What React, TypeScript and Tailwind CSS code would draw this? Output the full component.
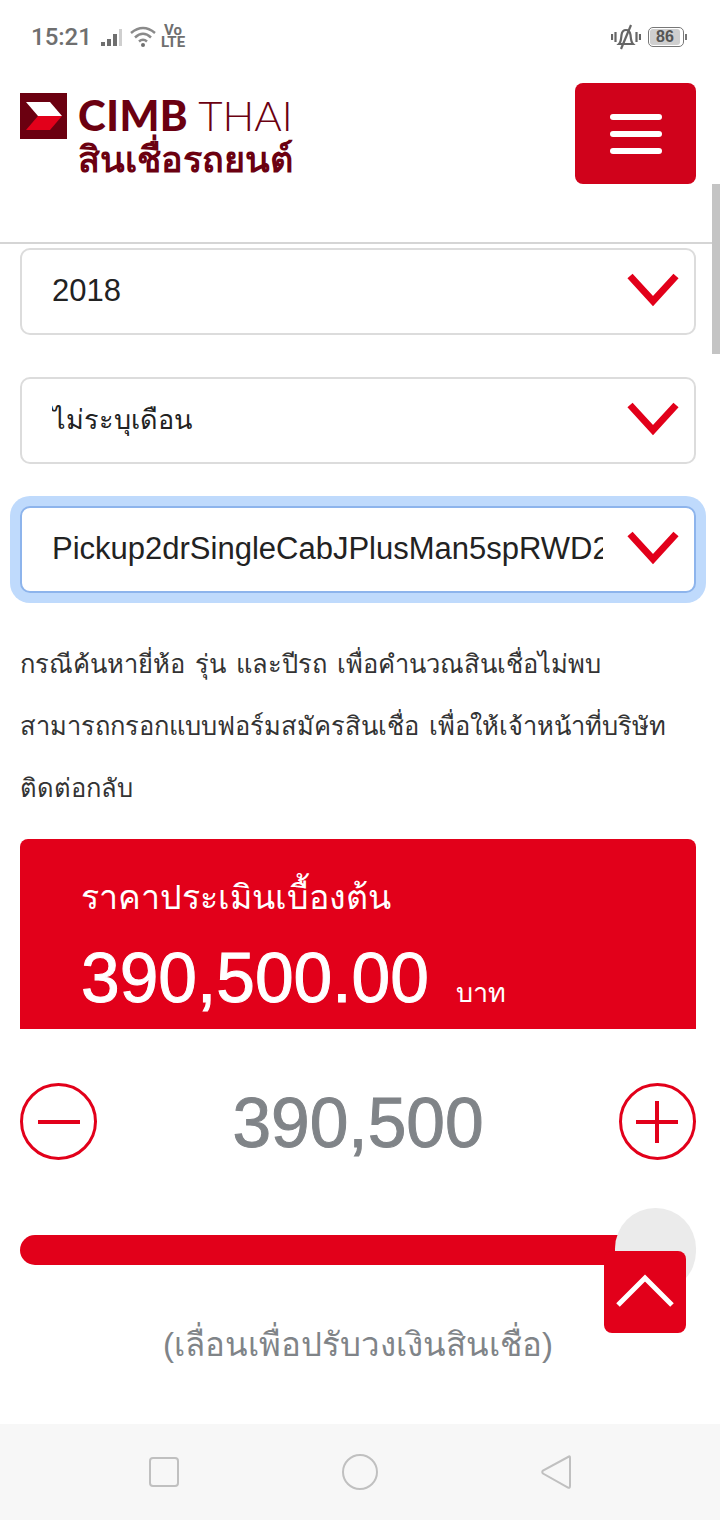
import React from 'react';

const SANS = 'font-["Liberation_Sans","Noto_Sans",sans-serif]';

const ChevronDown = () => (
  <svg width="52" height="36" viewBox="0 0 52 36" fill="none" className="shrink-0 -mt-[4px]">
    <path d="M3 4 L26 29 L49 4" stroke="#e2001a" strokeWidth="7" strokeLinejoin="miter" />
  </svg>
);

const SelectBox: React.FC<{ label: string; focused?: boolean; thai?: boolean }> = ({ label, focused, thai }) => (
  <div
    className={`h-[87px] rounded-[10px] border-2 bg-white flex items-center pl-[30px] pr-[15px] ${
      focused ? 'border-[#8db4ec] shadow-[0_0_0_10px_#bfdafc]' : 'border-[#dcdcdc]'
    }`}
  >
    <div className={`w-[551px] overflow-hidden whitespace-nowrap text-[#222] ${thai ? 'text-[27px]' : 'text-[31px]'}`}>
      {label}
    </div>
    <div className="ml-auto flex">
      <ChevronDown />
    </div>
  </div>
);

const StatusBar = () => (
  <div className="h-[74px] flex items-center justify-between pl-[31px] pr-[33px] text-[#6f6f6f] shrink-0">
    <div className="flex items-center">
      <span className="font-['Roboto',sans-serif] text-[24px] font-medium leading-none">15:21</span>
      <svg width="24" height="20" viewBox="0 0 24 20" className="ml-[8px] mt-[2px]">
        <rect x="1" y="14" width="4" height="4" fill="#6f6f6f" />
        <rect x="7" y="11" width="4" height="7" fill="#6f6f6f" />
        <rect x="13" y="6" width="4" height="12" fill="#6f6f6f" />
        <rect x="19" y="1" width="3" height="17" fill="#cfcfcf" />
      </svg>
      <svg width="28" height="22" viewBox="0 0 28 22" fill="none" className="ml-[5px]">
        <path d="M2 7 Q14 -3 26 7" stroke="#8a8a8a" strokeWidth="2.5" />
        <path d="M6 11.5 Q14 4 22 11.5" stroke="#8a8a8a" strokeWidth="2.5" />
        <path d="M10 15.5 Q14 12 18 15.5" stroke="#8a8a8a" strokeWidth="2.5" />
        <circle cx="14" cy="19" r="2" fill="#6f6f6f" />
      </svg>
      <div className="font-['Roboto',sans-serif] ml-[4px] -mt-[2px] flex flex-col items-center text-[15px] font-bold leading-[12px] text-[#6f6f6f]">
        <span>Vo</span>
        <span>LTE</span>
      </div>
    </div>
    <div className="flex items-center">
      <svg width="30" height="26" viewBox="0 0 30 26" fill="none" stroke="#666" strokeWidth="2.2">
        <path d="M1 10v6M4.500 8v10M25.500 8v10M29 10v6" />
        <path d="M8 20c2-2 2-5 2.500-9 .5-3.500 2-5 4.500-5s4 1.500 4.500 5c.5 4 .5 7 2.500 9z" />
        <path d="M20 1L10 25" />
      </svg>
      <div className="ml-[7px] w-[36px] h-[20px] rounded-[5px] border border-[#777] p-[1px] flex">
        <div className={`${SANS} w-[30px] rounded-[3px] bg-[#cfcfcf] text-[16px] font-bold leading-[16px] text-center text-[#555]`}>86</div>
      </div>
      <div className="ml-[1px] w-[2px] h-[6px] bg-[#777]" />
    </div>
  </div>
);

const Logo = () => (
  <div className="flex items-start">
    <svg width="47" height="46" viewBox="0 0 47 46" className="shrink-0">
      <rect width="47" height="46" fill="#6b0010" />
      <path d="M6 9 H30 L42 23 H18 Z" fill="#ffffff" />
      <path d="M18 23 H42 L30 37 H6 Z" fill="#e2001a" />
    </svg>
    <div className="ml-[11px] flex flex-col">
      <div className="flex items-center h-[44px] text-[#6b0010] whitespace-nowrap">
        <span className="font-['Lato',sans-serif] font-black text-[42px] leading-none tracking-[0.5px]">CIMB</span>
        <span className="font-['Lato',sans-serif] font-light text-[42px] leading-none ml-[10px]">THAI</span>
      </div>
      <div className={`${SANS} text-[#6b0010] font-bold text-[36px] leading-[42px] mt-[2px]`}>สินเชื่อรถยนต์</div>
    </div>
  </div>
);

const NavBar = () => (
  <div className="h-[96px] bg-[#f7f7f7] flex items-center justify-between pl-[149px] pr-[148px] shrink-0">
    <div className="w-[30px] h-[30px] rounded-[4px] border-2 border-[#c0c0c0]" />
    <div className="w-[36px] h-[36px] rounded-full border-2 border-[#c0c0c0]" />
    <svg width="32" height="36" viewBox="0 0 32 36" fill="none">
      <path d="M29 2.500 Q30 2 30 4 V32 Q30 34.500 28 33.500 L3 19.500 Q1.500 18 3 16.500 Z" stroke="#c0c0c0" strokeWidth="2" />
    </svg>
  </div>
);

export default function App() {
  return (
    <div className={`${SANS} relative w-[720px] h-[1520px] overflow-hidden bg-white flex flex-col`}>
      <StatusBar />

      {/* header */}
      <header className="h-[170px] shrink-0 border-b-2 border-[#d5d5d5] pl-[20px] pr-[24px] flex items-start justify-between">
        <div className="mt-[19px]">
          <Logo />
        </div>
        <button className="mt-[9px] w-[121px] h-[101px] rounded-lg bg-[#d0021b] flex flex-col items-center justify-center gap-[11px]">
          <span className="w-[52px] h-[6px] rounded-sm bg-white" />
          <span className="w-[52px] h-[6px] rounded-sm bg-white" />
          <span className="w-[52px] h-[6px] rounded-sm bg-white" />
        </button>
      </header>

      <main className="flex-1 px-[20px] pr-[24px] pt-[4px]">
        <div className="flex flex-col gap-[42px]">
          <SelectBox label="2018" />
          <SelectBox label="ไม่ระบุเดือน" thai />
          <SelectBox label="Pickup2drSingleCabJPlusMan5spRWD2.4" focused />
        </div>

        <p className="mt-[40px] text-[25.5px] leading-[62px] [word-spacing:3px] text-[#333] whitespace-nowrap">
          กรณีค้นหายี่ห้อ รุ่น และปีรถ เพื่อคำนวณสินเชื่อไม่พบ
          <br />
          สามารถกรอกแบบฟอร์มสมัครสินเชื่อ เพื่อให้เจ้าหน้าที่บริษัท
          <br />
          ติดต่อกลับ
        </p>

        {/* price card */}
        <div className="mt-[20px] h-[190px] rounded-t-lg bg-[#e2001a] pl-[61px] pt-[31px] text-white">
          <div className="text-[34px] leading-[54px]">ราคาประเมินเบื้องต้น</div>
          <div className="flex items-baseline mt-[16px]">
            <span className="text-[69.5px] leading-[76px] [-webkit-text-stroke:1px_white]">390,500.00</span>
            <span className="ml-[27px] text-[27px]">บาท</span>
          </div>
        </div>

        {/* stepper */}
        <div className="mt-[54px] flex items-center justify-between">
          <div className="w-[77px] h-[77px] rounded-full border-[3px] border-[#e2001a] flex items-center justify-center">
            <span className="w-[42px] h-[4px] bg-[#e2001a]" />
          </div>
          <div className="h-[77px] pt-[2px] text-[69.5px] leading-[77px] text-[#808488] [-webkit-text-stroke:1px_#808488]">390,500</div>
          <div className="relative w-[77px] h-[77px] rounded-full border-[3px] border-[#e2001a] flex items-center justify-center">
            <span className="w-[42px] h-[4px] bg-[#e2001a]" />
            <span className="absolute w-[4px] h-[42px] bg-[#e2001a]" />
          </div>
        </div>

        {/* slider */}
        <div className="relative mt-[75px] h-[30px] rounded-l-full bg-[#e2001a] mr-[76px]">
          <div className="absolute -right-[76px] -top-[27px] w-[81px] h-[84px] rounded-full bg-[#ebebeb]" />
        </div>

        <div className="mt-[60px] text-center text-[33px] leading-[40px] text-[#808488]">(เลื่อนเพื่อปรับวงเงินสินเชื่อ)</div>
      </main>

      <NavBar />

      {/* page scrollbar */}
      <div className="absolute right-0 top-[184px] w-[8px] h-[170px] bg-[#c4c4c4]" />

      {/* back to top */}
      <button className="absolute left-[604px] top-[1251px] w-[82px] h-[82px] rounded-lg bg-[#e2001a] flex items-center justify-center pb-[3px]">
        <svg width="60" height="36" viewBox="0 0 60 36" fill="none">
          <path d="M3 32 L30 5 L57 32" stroke="#ffffff" strokeWidth="5" />
        </svg>
      </button>
    </div>
  );
}
